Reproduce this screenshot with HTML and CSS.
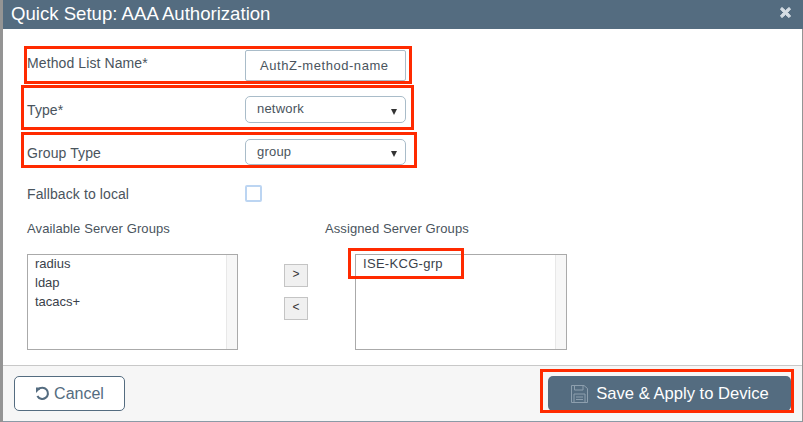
FILE: index.html
```html
<!DOCTYPE html>
<html lang="en">
<head>
    <meta charset="UTF-8">
    <title>Quick Setup: AAA Authorization</title>
    <link rel="stylesheet" href="styles.css">
</head>
<body>
    <div class="modal">
        <div class="modal-header">
            <span class="modal-title">Quick Setup: AAA Authorization</span>
            <svg class="close-icon" width="13" height="13" viewBox="0 0 13 13"><path d="M3 1.5 6.5 4.6 10 1.5 11.6 3 8.5 6.5 11.6 10 10 11.6 6.5 8.5 3 11.6 1.4 10 4.5 6.5 1.4 3Z" fill="#d5dde4" stroke="#d5dde4" stroke-linejoin="round"/></svg>
        </div>

        <div class="modal-body">
            <div class="form-row row-name">
                <label>Method List Name*</label>
                <div class="text-input">AuthZ-method-name</div>
            </div>
            <div class="form-row row-type">
                <label>Type*</label>
                <div class="select-input"><span>network</span><i class="arrow"></i></div>
            </div>
            <div class="form-row row-group">
                <label>Group Type</label>
                <div class="select-input"><span>group</span><i class="arrow"></i></div>
            </div>
            <div class="form-row row-fallback">
                <label>Fallback to local</label>
                <div class="checkbox"></div>
            </div>

            <div class="transfer">
                <div class="transfer-col col-left">
                    <div class="transfer-label">Available Server Groups</div>
                    <div class="listbox">
                        <ul>
                            <li>radius</li>
                            <li>ldap</li>
                            <li>tacacs+</li>
                        </ul>
                        <div class="scroll-track"></div>
                    </div>
                </div>
                <div class="transfer-buttons">
                    <button>&gt;</button>
                    <button>&lt;</button>
                </div>
                <div class="transfer-col col-right">
                    <div class="transfer-label">Assigned Server Groups</div>
                    <div class="listbox">
                        <ul>
                            <li>ISE-KCG-grp</li>
                        </ul>
                        <div class="scroll-track"></div>
                    </div>
                </div>
            </div>
        </div>

        <div class="modal-footer">
            <button class="btn-cancel">
                <svg width="15" height="15" viewBox="0 0 15 15"><path d="M3.2 3.6A5.6 5.6 0 1 1 2.4 10" fill="none" stroke="#546c80" stroke-width="2.1"/><path d="M1 1.6 6.4 1.6 1 7Z" fill="#546c80"/></svg>
                Cancel
            </button>
            <button class="btn-save">
                <svg width="18" height="18" viewBox="0 0 18 18"><path d="M1.5.5H14L17.5 3.5V17.5H1.5Z" fill="none" stroke="#8d9fae"/><path d="M4.5.5V5H13V.5M4 9H15V17.5H4ZM6 12H13M6 14.5H13" fill="none" stroke="#8d9fae"/></svg>
                Save &amp; Apply to Device
            </button>
        </div>
    </div>

    <!-- annotation boxes drawn over the screenshot -->
    <div class="mark mark-name"></div>
    <div class="mark mark-type"></div>
    <div class="mark mark-group"></div>
    <div class="mark mark-assigned"></div>
    <div class="mark mark-save"></div>
</body>
</html>
```

FILE: styles.css
```css
* {
    box-sizing: border-box;
}
html, body {
    height: 100%;
}
body {
    margin: 0;
    font-family: "Liberation Sans", Arial, sans-serif;
    background-color: #949494;
    overflow: hidden;
}
.modal {
    width: 799px;
    height: 421px;
    margin-left: 3px;
    background-color: white;
    display: flex;
    flex-direction: column;
}
.modal-header {
    height: 29px;
    flex: none;
    margin-right: -1px;
    padding: 0 11px 0 8px;
    display: flex;
    align-items: center;
    justify-content: space-between;
    background-color: #546c80;
}
.modal-title {
    margin-bottom: 2px;
    font-size: 18.6px;
    color: white;
}
.close-icon {
    display: block;
    margin-bottom: 5px;
}
.modal-body {
    flex: 1;
    padding: 21px 0 0 24px;
    color: #4a545d;
    font-size: 14px;
}
.form-row {
    display: grid;
    grid-template-columns: 218px 161px;
    align-items: center;
}
.form-row label {
    letter-spacing: 0.1px;
}
.row-name {
    height: 31px;
}
.row-name label {
    margin-top: -6px;
}
.row-type {
    height: 27px;
    margin-top: 15px;
}
.row-type label {
    margin-top: 1px;
}
.row-group {
    height: 26px;
    margin-top: 16px;
}
.row-group label {
    margin-top: 1px;
}
.row-fallback {
    height: 17px;
    margin-top: 19px;
}
.row-fallback label {
    margin-top: 2px;
}
.text-input {
    height: 100%;
    padding: 0 0 0 14px;
    display: flex;
    align-items: center;
    font-size: 13px;
    letter-spacing: 0.55px;
    border: 1px solid #a9bcc9;
    border-radius: 2px;
}
.select-input {
    height: 100%;
    padding: 0 8px 2px 11px;
    display: flex;
    align-items: center;
    justify-content: space-between;
    font-size: 13px;
    letter-spacing: 0.2px;
    border: 1px solid #a9bcc9;
    border-radius: 5px;
}
.arrow {
    margin-top: 6px;
    border-top: 6px solid #333;
    border-left: 3.5px solid transparent;
    border-right: 3.5px solid transparent;
}
.checkbox {
    width: 17px;
    height: 17px;
    border: 2px solid #bcd5f2;
    border-radius: 2px;
}
.transfer {
    display: flex;
    margin-top: 20px;
}
.transfer-col {
    width: 212px;
}
.col-left {
    width: 211px;
}
.col-right {
    margin-left: 47px;
}
.transfer-label {
    height: 33px;
    font-size: 13px;
    letter-spacing: 0.1px;
}
.col-right .transfer-label {
    margin-left: -30px;
    white-space: nowrap;
}
.listbox {
    height: 96px;
    display: flex;
    justify-content: space-between;
    border: 1px solid #aaa;
    background-color: white;
}
.listbox ul {
    margin: -1px 0 0;
    padding: 0 0 0 7px;
    list-style: none;
    font-size: 13px;
    line-height: 19px;
    color: #3a3f4a;
}
.col-right ul {
    letter-spacing: 0.3px;
}
.scroll-track {
    width: 11px;
    background-color: #f7f7f7;
    border-left: 1px solid #e8e8e8;
}
.transfer-buttons {
    margin: 43px 0 0 46px;
    display: flex;
    flex-direction: column;
    gap: 10px;
}
.transfer-buttons button {
    width: 24px;
    height: 23px;
    padding: 0 0 3px;
    font-family: inherit;
    font-size: 12px;
    color: #333;
    border: 1px solid #c4c4c4;
    background-color: #f0f0f0;
}
.modal-footer {
    height: 56px;
    flex: none;
    padding: 10px 11px 10px 11px;
    display: flex;
    justify-content: space-between;
    align-items: flex-start;
    background-color: #f6f6f6;
    border-top: 1px solid #c8c8c8;
    box-shadow: 0 1px 0 #8a9aa6;
}
.modal-footer button {
    height: 35px;
    display: flex;
    align-items: center;
    justify-content: center;
    font-family: inherit;
    border-radius: 5px;
    font-size: 16px;
}
.btn-cancel {
    width: 111px;
    gap: 4px;
    color: #546c80;
    background-color: white;
    border: 1px solid #546c80;
}
.modal-footer .btn-save {
    width: 243px;
    gap: 8px;
    font-size: 16.6px;
    color: white;
    background-color: #546c80;
    border: none;
}
.mark {
    position: absolute;
    border: 3px solid #ff2a00;
}
.mark-name {
    left: 24px;
    top: 46px;
    width: 388px;
    height: 38px;
}
.mark-type {
    left: 21px;
    top: 85px;
    width: 393px;
    height: 45px;
}
.mark-group {
    left: 21px;
    top: 132px;
    width: 396px;
    height: 36px;
}
.mark-assigned {
    left: 348px;
    top: 248px;
    width: 116px;
    height: 31px;
}
.mark-save {
    left: 540px;
    top: 369px;
    width: 254px;
    height: 44px;
}
```
